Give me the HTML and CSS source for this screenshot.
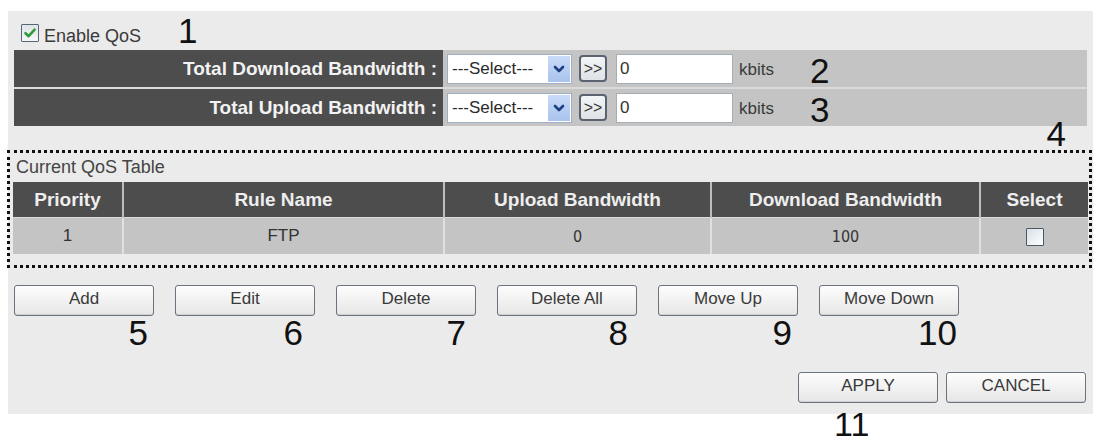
FILE: index.html
```html
<!DOCTYPE html>
<html>
<head>
<meta charset="utf-8">
<title>QoS</title>
<link rel="stylesheet" href="styles.css">
</head>
<body>
<div class="panel">
  <div class="enable">
    <span class="cb cb-on"><svg viewBox="0 0 16 16" width="16" height="16"><path d="M3.5 8.2 L6.6 11.2 L12.6 4.6" fill="none" stroke="#2f9a3c" stroke-width="2.6" stroke-linecap="round" stroke-linejoin="round"/></svg></span>
    <span class="enable-label">Enable QoS</span>
    <span class="num num-1">1</span>
  </div>

  <table class="bw">
    <colgroup><col class="c-label"><col class="c-ctl"></colgroup>
    <tr>
      <td class="label">Total Download Bandwidth :</td>
      <td class="ctl">
        <div class="ctl-row">
          <div class="sel"><span class="sel-text">---Select---</span><span class="sel-arrow"><svg viewBox="0 0 14 14" width="14" height="14"><path d="M3 5 L7 9 L11 5" fill="none" stroke="#1d3f86" stroke-width="2.6" stroke-linecap="round" stroke-linejoin="round"/></svg></span></div>
          <span class="go">&gt;&gt;</span>
          <span class="inp">0</span>
          <span class="unit">kbits</span>
          <span class="num num-in">2</span>
        </div>
      </td>
    </tr>
    <tr class="second">
      <td class="label">Total Upload Bandwidth :</td>
      <td class="ctl">
        <div class="ctl-row">
          <div class="sel"><span class="sel-text">---Select---</span><span class="sel-arrow"><svg viewBox="0 0 14 14" width="14" height="14"><path d="M3 5 L7 9 L11 5" fill="none" stroke="#1d3f86" stroke-width="2.6" stroke-linecap="round" stroke-linejoin="round"/></svg></span></div>
          <span class="go">&gt;&gt;</span>
          <span class="inp">0</span>
          <span class="unit">kbits</span>
          <span class="num num-in">3</span>
        </div>
      </td>
    </tr>
  </table>

  <div class="qos-box">
    <span class="num num-4">4</span>
    <div class="qos-title">Current QoS Table</div>
    <table class="qos">
      <colgroup><col class="q1"><col class="q2"><col class="q3"><col class="q4"><col class="q5"></colgroup>
      <tr>
        <th>Priority</th>
        <th>Rule Name</th>
        <th>Upload Bandwidth</th>
        <th>Download Bandwidth</th>
        <th>Select</th>
      </tr>
      <tr>
        <td>1</td>
        <td>FTP</td>
        <td class="digits">0</td>
        <td class="digits">100</td>
        <td><span class="cb cb-off"></span></td>
      </tr>
    </table>
  </div>

  <div class="actions">
    <div class="act"><button class="btn">Add</button><div class="num num-b n5">5</div></div>
    <div class="act"><button class="btn">Edit</button><div class="num num-b n6">6</div></div>
    <div class="act"><button class="btn">Delete</button><div class="num num-b n7">7</div></div>
    <div class="act"><button class="btn">Delete All</button><div class="num num-b n8">8</div></div>
    <div class="act"><button class="btn">Move Up</button><div class="num num-b n9">9</div></div>
    <div class="act"><button class="btn">Move Down</button><div class="num num-b n10">10</div></div>
  </div>

  <div class="submit">
    <button class="btn">APPLY</button>
    <button class="btn">CANCEL</button>
  </div>
</div>
<div class="foot"><span class="num num-11">11</span></div>
</body>
</html>
```

FILE: styles.css
```css
html, body {
  margin: 0;
  padding: 0;
  background: #ffffff;
}

body {
  font-family: "Liberation Sans", Arial, sans-serif;
  color: #333;
}

.panel {
  margin: 11px 3px 0 8px;
  width: 1085px;
  box-sizing: border-box;
  background: #ebebeb;
  padding: 0 6px 11px 6px;
}

/* Enable QoS row */
.enable {
  display: flex;
  align-items: flex-start;
  height: 39px;
  box-sizing: border-box;
  padding: 13px 0 0 7px;
}

.cb {
  display: inline-flex;
  align-items: center;
  justify-content: center;
  box-sizing: border-box;
  width: 18px;
  height: 18px;
  border: 1px solid #56677a;
  border-radius: 1px;
}

.cb-on {
  background: linear-gradient(#dfe4e8, #f6f7f8);
}

.cb-off {
  background: linear-gradient(135deg, #d7e0ea, #ffffff);
  border-color: #4a5866;
  vertical-align: middle;
}

.enable-label {
  margin-left: 5px;
  margin-top: 2px;
  font-size: 18px;
  color: #3a3a3a;
}

.num {
  font-family: "Liberation Sans", Arial, sans-serif;
  font-size: 35px;
  line-height: 30px;
  color: #111;
}

.num-1 {
  margin-left: 37px;
  margin-top: -8px;
}

/* Bandwidth bars */
.bw {
  width: 1073px;
  border-collapse: collapse;
  table-layout: fixed;
}

.c-label { width: 429px; }
.c-ctl { width: 644px; }

.bw td {
  height: 37px;
  padding: 0;
}

.bw tr.second td {
  border-top: 2px solid #dadada;
}

.bw .label {
  background: #4d4d4d;
  color: #f2f2f2;
  font-weight: bold;
  font-size: 19px;
  text-align: right;
  padding-right: 6px;
  white-space: nowrap;
}

.bw .ctl {
  background: #c4c4c4;
  padding-left: 4px;
}

.ctl-row {
  display: flex;
  align-items: center;
}

.sel {
  display: flex;
  width: 125px;
  height: 30px;
  box-sizing: border-box;
  border: 1px solid #9fb0c4;
  background: #ffffff;
}

.sel-text {
  flex: 1;
  font-size: 17px;
  line-height: 28px;
  padding-left: 4px;
  color: #2a2a2a;
}

.sel-arrow {
  width: 22px;
  margin: 1px;
  background: linear-gradient(#c9dbf7, #a9c3ee);
  display: flex;
  align-items: center;
  justify-content: center;
}

.go {
  margin-left: 7px;
  width: 28px;
  height: 27px;
  box-sizing: border-box;
  border: 2px solid #5a6370;
  border-radius: 4px;
  background: linear-gradient(#f2f4f6, #dfe3e7);
  font-size: 16px;
  line-height: 23px;
  text-align: center;
  color: #333;
}

.inp {
  margin-left: 9px;
  width: 117px;
  height: 30px;
  box-sizing: border-box;
  border: 1px solid #a5adb5;
  background: #ffffff;
  font-size: 17px;
  line-height: 28px;
  padding-left: 3px;
  color: #333;
}

.unit {
  margin-left: 6px;
  font-size: 17px;
  color: #3a3a3a;
  margin-top: 3px;
}

.num-in {
  margin-left: 36px;
  margin-top: 4px;
}

/* QoS table box */
.qos-box {
  position: relative;
  margin: 24px -5px 0 -7px;
  border: 3px dotted #111;
  padding: 0 1px 11px 3px;
}

.num-4 {
  position: absolute;
  top: -34px;
  right: 23px;
}

.qos-title {
  font-size: 18px;
  line-height: 29px;
  color: #444;
  padding-left: 3px;
}

.qos {
  width: 1075px;
  border-collapse: collapse;
  table-layout: fixed;
}

.q1 { width: 110px; }
.q2 { width: 321px; }
.q3 { width: 267px; }
.q4 { width: 269px; }
.q5 { width: 108px; }

.qos th {
  height: 35px;
  padding: 0;
  background: #4d4d4d;
  color: #eeeeee;
  font-weight: bold;
  font-size: 19px;
  text-align: center;
}

.qos th + th {
  border-left: 2px solid #bdbdbd;
}

.qos td {
  height: 36px;
  padding: 0;
  background: #c4c4c4;
  border-top: 1px solid #dcdcdc;
  font-size: 17px;
  color: #333;
  text-align: center;
}

.qos td + td {
  border-left: 2px solid #e0e0e0;
}

.qos td.digits {
  font-family: "DejaVu Sans Condensed", "DejaVu Sans", sans-serif;
  font-size: 16px;
}

/* Buttons */
.btn {
  width: 140px;
  height: 31px;
  box-sizing: border-box;
  border: 1px solid #6b7380;
  border-radius: 3px;
  background: linear-gradient(#fdfdfd, #e6e6e6);
  box-shadow: inset 0 -1px 0 #cfcfcf;
  font-family: "Liberation Sans", Arial, sans-serif;
  font-size: 17px;
  color: #3a3a3a;
  padding: 0 0 4px 0;
  margin: 0;
}

.actions {
  display: flex;
  gap: 21px;
  margin-top: 17px;
}

.act {
  display: flex;
  flex-direction: column;
  width: 140px;
}

.num-b {
  margin-top: 2px;
  text-align: right;
}

.n5 { padding-right: 6px; }
.n6 { padding-right: 12px; }
.n7 { padding-right: 10px; }
.n8 { padding-right: 9px; }
.n9 { padding-right: 6px; }
.n10 { padding-right: 2px; }

.submit {
  display: flex;
  justify-content: flex-end;
  gap: 8px;
  margin-top: 24px;
  margin-right: 1px;
}

/* annotation under APPLY */
.foot {
  margin-top: -4px;
  padding-left: 834px;
  height: 28px;
}

.num-11 {
  display: inline-block;
  line-height: 28px;
  font-size: 34px;
}
```
